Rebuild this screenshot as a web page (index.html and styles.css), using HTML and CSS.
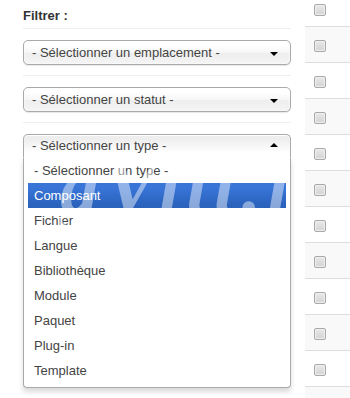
FILE: index.html
```html
<!DOCTYPE html>
<html lang="fr">
<head>
<meta charset="UTF-8">
<title>Filtrer</title>
<link rel="stylesheet" href="styles.css">
</head>
<body>
<div class="page">
<div class="sidebar">
<h4 class="filter-title">Filtrer :</h4>
<hr>
<div class="chosen">
<a class="chosen-single"><span>- Sélectionner un emplacement -</span><b class="caret"></b></a>
</div>
<hr>
<div class="chosen">
<a class="chosen-single"><span>- Sélectionner un statut -</span><b class="caret"></b></a>
</div>
<hr>
<div class="chosen chosen-open">
<a class="chosen-single"><span>- Sélectionner un type -</span><b class="caret caret-up"></b></a>
<div class="chosen-drop">
<ul class="chosen-results">
<li>- Sélectionner un type -</li>
<li class="highlighted">Composant</li>
<li>Fichier</li>
<li>Langue</li>
<li>Bibliothèque</li>
<li>Module</li>
<li>Paquet</li>
<li>Plug-in</li>
<li>Template</li>
</ul>
<div class="watermark" aria-hidden="true">gVitt.l</div>
</div>
</div>
</div>

<div class="list">
<div class="row"><span class="check"></span></div>
<div class="row striped"><span class="check"></span></div>
<div class="row"><span class="check"></span></div>
<div class="row striped"><span class="check"></span></div>
<div class="row"><span class="check"></span></div>
<div class="row striped"><span class="check"></span></div>
<div class="row"><span class="check"></span></div>
<div class="row striped"><span class="check"></span></div>
<div class="row"><span class="check"></span></div>
<div class="row striped"><span class="check"></span></div>
<div class="row"><span class="check"></span></div>
<div class="row striped"><span class="check"></span></div>
</div>
</div>
</body>
</html>
```

FILE: styles.css
```css
body {
margin: 0;
font-family: "Liberation Sans", Arial, sans-serif;
font-size: 13px;
color: #444;
background: #fff;
overflow: hidden;
}
.page {
display: flex;
align-items: flex-start;
height: 398px;
}
.sidebar {
width: 268px;
padding: 7px 0 0 23px;
flex-shrink: 0;
}
.filter-title {
margin: 0 0 3px;
font-size: 13px;
line-height: 18px;
color: #333;
font-weight: bold;
}
hr {
margin: 0 0 10px;
border: 0;
border-top: 1px solid #eee;
border-bottom: 1px solid #fff;
}
.chosen {
position: relative;
margin-bottom: 10px;
}
.chosen-single {
display: flex;
align-items: center;
justify-content: space-between;
height: 23px;
padding: 0 12px 0 8px;
border: 1px solid #aaa;
border-radius: 5px;
background: linear-gradient(#fff 20%, #f6f6f6 50%, #eee 52%, #f4f4f4 100%);
box-shadow: 0 0 3px #fff inset, 0 1px 1px rgba(0,0,0,0.1);
line-height: 24px;
color: #444;
white-space: nowrap;
}
.caret {
width: 0;
height: 0;
border-left: 4px solid transparent;
border-right: 4px solid transparent;
border-top: 4px solid #000;
margin-top: 3px;
}
.caret-up {
border-top: 0;
border-bottom: 4px solid #000;
margin-top: -2px;
}
.chosen-open .chosen-single {
height: 22px;
border-bottom: 1px solid #fff;
border-radius: 5px 5px 0 0;
background: linear-gradient(#eee 20%, #fff 80%);
box-shadow: 0 1px 0 #fff inset;
}
.chosen-drop {
position: relative;
overflow: hidden;
background: #fff;
border: 1px solid #aaa;
border-top: 0;
border-radius: 0 0 4px 4px;
box-shadow: 0 4px 5px rgba(0,0,0,0.15);
}
.chosen-results {
list-style: none;
margin: 0 4px 4px 0;
padding: 0 0 0 4px;
}
.chosen-results li {
padding: 5px 6px;
line-height: 15px;
color: #444;
}
.chosen-results li.highlighted {
background: linear-gradient(#3875d7 20%, #2a62bc 90%);
color: #fff;
}
.watermark {
position: absolute;
left: 36px;
top: -16px;
font-family: "Liberation Serif", serif;
font-style: italic;
font-weight: bold;
font-size: 78px;
letter-spacing: 6px;
color: rgba(255,255,255,0.45);
pointer-events: none;
white-space: nowrap;
}
.list {
margin: -10px 0 0 14px;
flex: 1;
}
.row {
height: 35px;
border-top: 1px solid #ddd;
}
.striped {
background: #f9f9f9;
}
.check {
display: block;
width: 10px;
height: 10px;
margin: 13px 0 0 9px;
border: 1px solid #a9a9a9;
border-radius: 2px;
background: linear-gradient(#e8e8e8, #d4d4d4);
box-shadow: 0 0 0 1px #eee inset;
}
```
